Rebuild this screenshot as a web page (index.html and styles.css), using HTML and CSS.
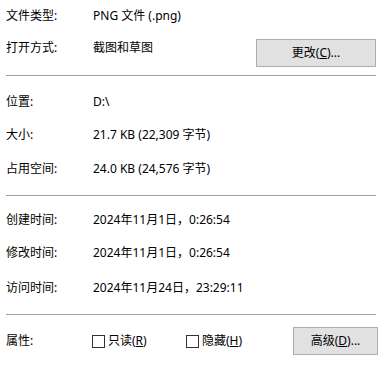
FILE: index.html
```html
<!DOCTYPE html>
<html lang="zh-CN">
<head>
<meta charset="utf-8">
<link rel="stylesheet" href="styles.css">
</head>
<body>
<div class="panel">
  <section class="sec sec-type">
    <div class="row r1"><span class="label">文件类型:</span><span class="value">PNG 文件 (.png)</span></div>
    <div class="row r2 with-btn">
      <span class="label">打开方式:</span><span class="value grow">截图和草图</span>
      <button class="btn btn-change">更改(<u>C</u>)...</button>
    </div>
  </section>
  <hr class="sep sep1">
  <section class="sec sec-size">
    <div class="row s1"><span class="label">位置:</span><span class="value">D:\</span></div>
    <div class="row s2"><span class="label">大小:</span><span class="value">21.7 KB (22,309 字节)</span></div>
    <div class="row s3"><span class="label">占用空间:</span><span class="value">24.0 KB (24,576 字节)</span></div>
  </section>
  <hr class="sep sep2">
  <section class="sec sec-time">
    <div class="row t1"><span class="label">创建时间:</span><span class="value">2024年11月1日，0:26:54</span></div>
    <div class="row t2"><span class="label">修改时间:</span><span class="value">2024年11月1日，0:26:54</span></div>
    <div class="row t3"><span class="label">访问时间:</span><span class="value">2024年11月24日，23:29:11</span></div>
  </section>
  <hr class="sep sep3">
  <section class="sec sec-attr">
    <div class="row attr">
      <span class="label">属性:</span>
      <label class="check c1"><span class="box"></span><span class="ctext">只读(<u>R</u>)</span></label>
      <label class="check c2"><span class="box"></span><span class="ctext">隐藏(<u>H</u>)</span></label>
      <button class="btn btn-adv">高级(<u>D</u>)...</button>
    </div>
  </section>
</div>
</body>
</html>
```

FILE: styles.css
```css
html, body {
  margin: 0;
  padding: 0;
  background: #ffffff;
}
body {
  font-family: "Noto Sans", "Noto Sans CJK SC", sans-serif;
  font-size: 12px;
  color: #000;
  width: 389px;
  height: 367px;
  overflow: hidden;
}
.panel {
  padding: 8px 13px 0 6px;
}
.sec { margin: 0; }
.row {
  display: flex;
  line-height: 16px;
  height: 16px;
  white-space: nowrap;
}
.label {
  width: 87px;
  flex: none;
}
.value.grow { flex: 1; }
.r1 { margin-bottom: 15px; }
.with-btn {
  height: 28px;
  align-items: flex-start;
}
.with-btn .label, .with-btn .value { padding-top: 1px; }
.btn {
  font-family: inherit;
  font-size: 12px;
  color: #000;
  background: #e1e1e1;
  border: 1px solid #adadad;
  border-radius: 0;
  padding: 0;
  height: 28px;
  line-height: 24px;
  margin: 0;
}
.btn-change { width: 120px; }
.sep {
  border: 0;
  height: 1px;
  background: #a0a0a0;
  margin: 0;
}
.sep1 { margin-top: 8px; }
.sec-size { padding-top: 18px; }
.s1 { margin-bottom: 17px; }
.s2 { margin-bottom: 18px; }
.sep2 { margin-top: 18px; }
.sec-time { padding-top: 16px; }
.t1 { margin-bottom: 17px; }
.t2 { margin-bottom: 19px; }
.sep3 { margin-top: 18px; }
.sec-attr { padding-top: 12px; }
.attr {
  height: 28px;
  align-items: center;
}
.attr .label { width: 86px; }
.check {
  display: flex;
  align-items: center;
  gap: 3px;
}
.c1 { width: 94px; }
.c2 { flex: 1; }
.box {
  width: 11px;
  height: 11px;
  border: 1px solid #333;
  background: #fff;
  flex: none;
}
.btn-adv {
  width: 85px;
  margin-right: -2px;
}
```
